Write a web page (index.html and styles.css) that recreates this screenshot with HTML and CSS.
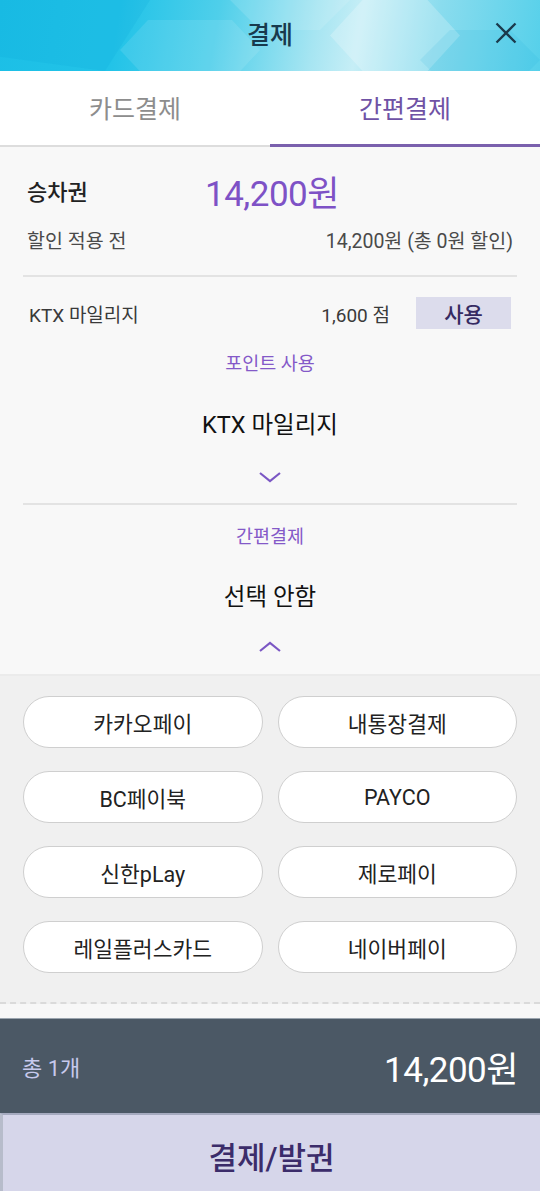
FILE: index.html
```html
<!DOCTYPE html>
<html lang="ko">
<head>
<meta charset="utf-8">
<link rel="stylesheet" href="styles.css">
</head>
<body>
<div class="page">
  <header class="header">
    <div class="poly poly1"></div>
    <div class="poly poly2"></div>
    <div class="poly poly3"></div>
    <div class="poly poly4"></div>
    <div class="poly poly5"></div>
    <h1 class="title">결제</h1>
    <button class="close" aria-label="닫기">
      <svg width="24" height="24" viewBox="0 0 24 24"><path d="M2.5 2.5L21.5 21.5M21.5 2.5L2.5 21.5" stroke="#1b3a4c" stroke-width="2.3" fill="none"/></svg>
    </button>
  </header>
  <nav class="tabs">
    <div class="tab">카드결제</div>
    <div class="tab active">간편결제</div>
  </nav>
  <section class="content">
    <div class="fare-row">
      <span class="fare-label">승차권</span>
      <span class="fare-price">14,200원</span>
    </div>
    <div class="info-row">
      <span>할인 적용 전</span>
      <span>14,200원 (총 0원 할인)</span>
    </div>
    <div class="divider"></div>
    <div class="mile-row">
      <span class="mile-label">KTX 마일리지</span>
      <span class="mile-point">1,600 점</span>
      <button class="use-btn">사용</button>
    </div>
    <div class="picker first">
      <div class="picker-label">포인트 사용</div>
      <div class="picker-value">KTX 마일리지</div>
      <svg class="chev" width="24" height="14" viewBox="0 0 24 14"><path d="M2 3L12 11L22 3" stroke="#7b57c4" stroke-width="2.2" fill="none"/></svg>
    </div>
    <div class="divider"></div>
    <div class="picker second">
      <div class="picker-label">간편결제</div>
      <div class="picker-value">선택 안함</div>
      <svg class="chev" width="24" height="14" viewBox="0 0 24 14"><path d="M2 11L12 3L22 11" stroke="#7b57c4" stroke-width="2.2" fill="none"/></svg>
    </div>
  </section>
  <section class="pay-options">
    <div class="grid">
      <button class="opt">카카오페이</button>
      <button class="opt">내통장결제</button>
      <button class="opt">BC페이북</button>
      <button class="opt">PAYCO</button>
      <button class="opt">신한pLay</button>
      <button class="opt">제로페이</button>
      <button class="opt">레일플러스카드</button>
      <button class="opt">네이버페이</button>
    </div>
  </section>
  <div class="spacer"></div>
  <footer class="total">
    <span class="total-count">총 1개</span>
    <span class="total-price">14,200원</span>
  </footer>
  <button class="pay-btn">결제/발권</button>
</div>
</body>
</html>
```

FILE: styles.css
```css
* { box-sizing: border-box; }
html, body { margin: 0; padding: 0; }
body {
  font-family: Roboto, "Noto Sans CJK KR", sans-serif;
  background: #fff;
  width: 540px;
  height: 1191px;
  overflow: hidden;
}
button { font-family: inherit; }
.page { display: flex; flex-direction: column; height: 1191px; }

.header {
  position: relative;
  height: 71px;
  flex: none;
  overflow: hidden;
  display: flex;
  align-items: center;
  justify-content: center;
  background: linear-gradient(100deg, #1cbfe6 0%, #22c3e8 22%, #4fcfea 40%, #a6e5f2 58%, #c6eef6 66%, #8adcee 80%, #55d0ea 100%);
}
.poly { position: absolute; background: #ffffff; }
.poly1 { left: 0; top: 0; width: 150px; height: 71px; background: #0aa6d6; opacity: 0.18; clip-path: polygon(0 0, 100% 0, 70% 100%, 0 80%); }
.poly2 { left: 120px; top: 20px; width: 140px; height: 60px; opacity: 0.10; clip-path: polygon(20% 0, 80% 0, 100% 50%, 80% 100%, 20% 100%, 0 50%); }
.poly3 { left: 330px; top: 0; width: 130px; height: 71px; opacity: 0.22; clip-path: polygon(25% 0, 75% 0, 100% 50%, 75% 100%, 25% 100%, 0 50%); }
.poly4 { left: 420px; top: 30px; width: 120px; height: 60px; background: #0aa6d6; opacity: 0.10; clip-path: polygon(25% 0, 75% 0, 100% 50%, 75% 100%, 25% 100%, 0 50%); }
.poly5 { left: 230px; top: -30px; width: 120px; height: 60px; opacity: 0.12; clip-path: polygon(25% 0, 75% 0, 100% 50%, 75% 100%, 25% 100%, 0 50%); }
.title {
  position: relative;
  margin: 0;
  font-size: 25px;
  line-height: 30px;
  font-weight: 500;
  color: #183a4d;
}
.close {
  position: absolute;
  right: 22px;
  top: 21px;
  width: 24px;
  height: 24px;
  padding: 0;
  border: 0;
  background: none;
}

.tabs {
  display: flex;
  height: 76px;
  flex: none;
  background: #fff;
}
.tab {
  flex: 1;
  display: flex;
  align-items: center;
  justify-content: center;
  font-size: 25px;
  color: #8d8d8d;
  border-bottom: 2px solid #dddddd;
  padding-bottom: 2px;
}
.tab.active {
  color: #6f52a5;
  border-bottom: 3px solid #7a60ad;
  padding-bottom: 1px;
}

.content {
  background: #f8f8f8;
  padding: 0 23px 20px;
  flex: none;
  border-bottom: 2px solid #ebebeb;
}
.fare-row {
  display: flex;
  align-items: center;
  height: 86px;
  padding: 0 0 0 4px;
}
.fare-label { font-size: 22px; color: #222; width: 178px; font-weight: 500; }
.fare-price { font-size: 35px; color: #7e52c6; letter-spacing: -0.5px; }
.info-row {
  display: flex;
  justify-content: space-between;
  height: 42px;
  font-size: 19.5px;
  line-height: 22px;
  color: #4a4a4a;
  padding: 0 4px;
  margin-top: -2px;
}
.info-row + .divider { margin-top: 2px; }
.divider { height: 2px; background: #e3e3e3; }
.mile-row {
  display: flex;
  align-items: center;
  height: 72px;
  padding: 0 6px;
  font-size: 19px;
  color: #3a3a3a;
  margin-bottom: 2px;
}
.mile-label { flex: 1; }
.mile-point { margin-right: 26px; }
.use-btn {
  width: 95px;
  height: 32px;
  border: 0;
  background: #dcdcec;
  color: #352a62;
  font-size: 21px;
  font-weight: 500;
  padding: 0;
}
.picker {
  display: flex;
  flex-direction: column;
  align-items: center;
}
.picker.first { padding-top: 3px; padding-bottom: 19px; }
.picker.second { padding-top: 22px; }
.picker-label { font-size: 18.5px; line-height: 20px; color: #8459c8; }
.picker-value { font-size: 23.5px; line-height: 30px; color: #111; margin-top: 36px; }
.picker.second .picker-value { margin-top: 35px; }
.chev { display: block; margin-top: 30px; }
.picker.second .chev { margin-top: 28px; }

.pay-options {
  background: #f0f0f0;
  padding: 20px 23px 29px;
  flex: none;
  border-bottom: 2px dashed #dadada;
}
.grid {
  display: grid;
  grid-template-columns: 1fr 1fr;
  column-gap: 15px;
  row-gap: 23px;
}
.opt {
  height: 52px;
  border-radius: 26px;
  border: 1.5px solid #cfcfcf;
  background: #fff;
  font-size: 21.5px;
  color: #222;
  padding: 0;
}
.spacer { height: 15px; background: #f7f7f7; flex: none; border-bottom: 1px solid #9aa4ae; }
.total {
  background: #4b5865;
  height: 94px;
  flex: none;
  display: flex;
  justify-content: space-between;
  align-items: center;
  padding: 0 22px;
}
.total-count { font-size: 22px; color: #c7c9ec; }
.total-price { font-size: 35px; color: #fff; letter-spacing: -0.5px; }
.pay-btn {
  flex: 1;
  border: 0;
  border-top: 2px solid #a5aabf;
  border-left: 3px solid #b7bccb;
  background: #d6d6ea;
  color: #3b2c6a;
  font-size: 31px;
  font-weight: 500;
  padding: 4px 0 0;
}
```
